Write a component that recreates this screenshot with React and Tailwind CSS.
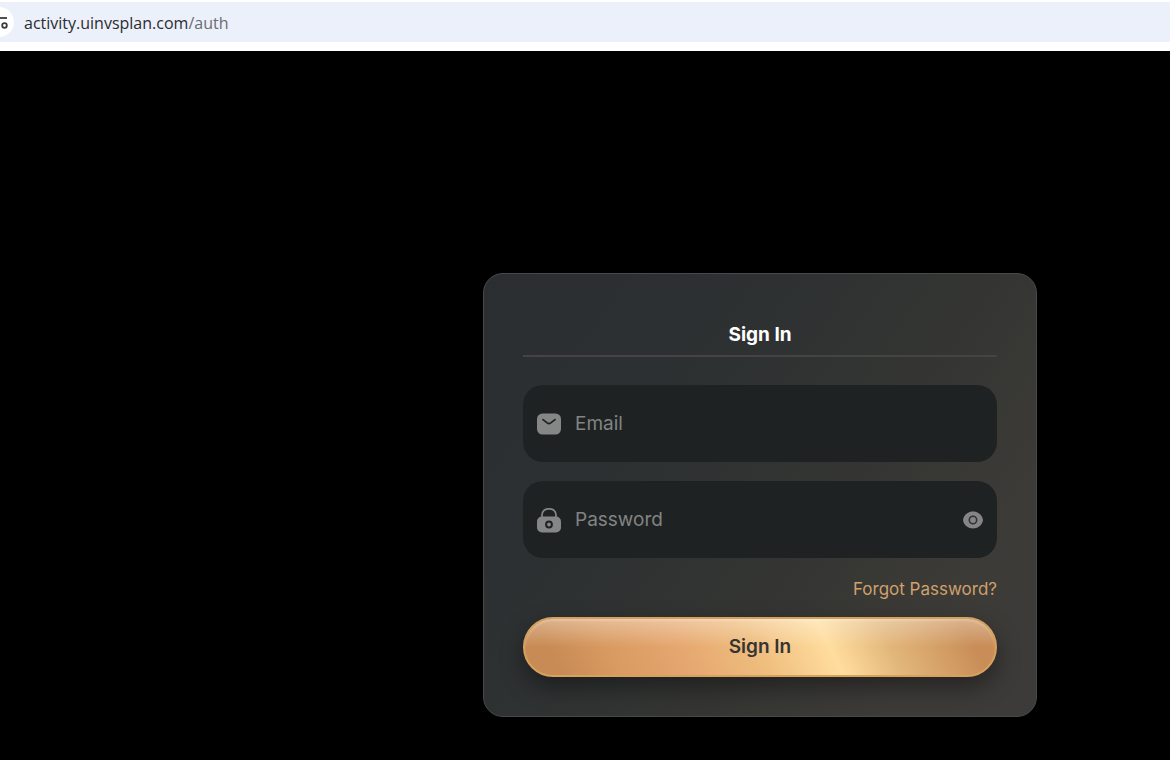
import { useState } from 'react'

function MailIcon() {
  return (
    <svg width="26" height="24" viewBox="0 0 26 24" fill="none" aria-hidden="true">
      <rect x="1" y="1.5" width="24" height="21" rx="5.5" fill="#858786" />
      <path d="M7 7.600l4.200 3.300a3 3 0 0 0 3.600 0L19 7.600" stroke="#1f2223" strokeWidth="1.800" strokeLinecap="round" />
    </svg>
  )
}

function LockIcon() {
  return (
    <svg width="26" height="26" viewBox="0 0 26 26" fill="none" aria-hidden="true">
      <path d="M6 11V7.800a6 6 0 0 1 6-6h2a6 6 0 0 1 6 6V11" stroke="#858786" strokeWidth="1.700" />
      <rect x="1" y="9.500" width="24" height="16" rx="5" fill="#858786" />
      <circle cx="13" cy="17.500" r="2.900" stroke="#1f2223" strokeWidth="2" />
    </svg>
  )
}

function EyeIcon() {
  return (
    <svg width="20" height="18" viewBox="0 0 20 18" fill="none" aria-hidden="true">
      <path d="M10 .5C5.500.5 2.300 3 .8 6.200a6 6 0 0 0 0 5.600C2.300 15 5.500 17.500 10 17.500s7.700-2.500 9.200-5.700a6 6 0 0 0 0-5.600C17.700 3 14.500.5 10 .5Z" fill="#858585" />
      <circle cx="10" cy="9" r="3.700" stroke="#303334" strokeWidth="1.600" />
    </svg>
  )
}

function AddressBar() {
  return (
    <header className="h-[51px] bg-white pt-[2px]">
      <div className="flex h-10 items-center gap-[10px] overflow-hidden bg-[#ecf0fa]">
        <div className="-ml-4 flex size-[30px] shrink-0 items-center justify-end rounded-full bg-white">
          <svg width="20" height="16" viewBox="0 0 20 16" fill="none" stroke="#3b3d40" strokeWidth="1.800" className="mr-[6px]" aria-hidden="true">
            <path d="M8 4h11" />
            <circle cx="16.500" cy="11.500" r="2.300" />
          </svg>
        </div>
        <div className="pt-[2px] font-['Open_Sans','Noto_Sans',sans-serif] text-[16px] text-[#2a2c2f]">
          activity.uinvsplan.com<span className="text-[#696c70]">/auth</span>
        </div>
      </div>
    </header>
  )
}

function Field({ id, label, type, icon, children }) {
  return (
    <div className="flex h-[77px] items-center gap-[13px] rounded-[20px] bg-[#1f2223] pr-[14px] pl-[13px]">
      <label htmlFor={id} aria-label={label} className="shrink-0">
        {icon}
      </label>
      <input
        id={id}
        type={type}
        placeholder={label}
        className="h-12 min-w-0 flex-1 bg-transparent text-[19px] text-white placeholder:text-[#828484] focus:outline-none"
      />
      {children}
    </div>
  )
}

export default function App() {
  const [visible, setVisible] = useState(false)

  return (
    <div className="flex min-h-screen flex-col bg-black font-['Inter',sans-serif]">
      <AddressBar />
      <main className="flex flex-1 items-end justify-end pr-[133px] pb-[43px] pl-4">
        <form
          className="w-full max-w-[554px] rounded-[20px] border border-[#484a49] bg-linear-[125deg,#2b2e31_0%,#2e3132_36%,#353633_62%,#3d3b38_82%,#3d3b39_100%] px-[39px] pt-[47px] pb-[39px]"
          onSubmit={(e) => e.preventDefault()}
        >
          <h1 className="border-b-2 border-[#454343] pb-[6px] text-center text-[19px] leading-7 font-bold text-white">
            Sign In
          </h1>
          <div className="mt-7 flex flex-col gap-[19px]">
            <Field id="email" label="Email" type="email" icon={<MailIcon />} />
            <Field id="password" label="Password" type={visible ? 'text' : 'password'} icon={<LockIcon />}>
              <button type="button" aria-label="Show password" onClick={() => setVisible(!visible)}>
                <EyeIcon />
              </button>
            </Field>
          </div>
          <div className="mt-[18px] mb-[15px] text-right text-[17px] leading-[26px]">
            <a href="#forgot" className="text-[#cfa16b]">Forgot Password?</a>
          </div>
          <button
            type="submit"
            className="h-[60px] w-full rounded-full border-2 border-[#d5a15d] bg-[linear-gradient(180deg,rgba(255,255,255,.35)_0%,rgba(255,255,255,0)_50%),linear-gradient(65deg,#c98b55_8%,#d99b61_20%,#e5a66f_33%,#efbd7e_49%,#ffdd9e_64%,#e2b67a_76%,#c98d57_93%,#c98d57_100%)] bg-origin-border text-[19px] font-semibold text-[#343434] shadow-[0_10px_24px_rgba(0,0,0,0.4),inset_0_2px_2px_rgba(255,255,255,0.2)]"
          >
            Sign In
          </button>
        </form>
      </main>
    </div>
  )
}
